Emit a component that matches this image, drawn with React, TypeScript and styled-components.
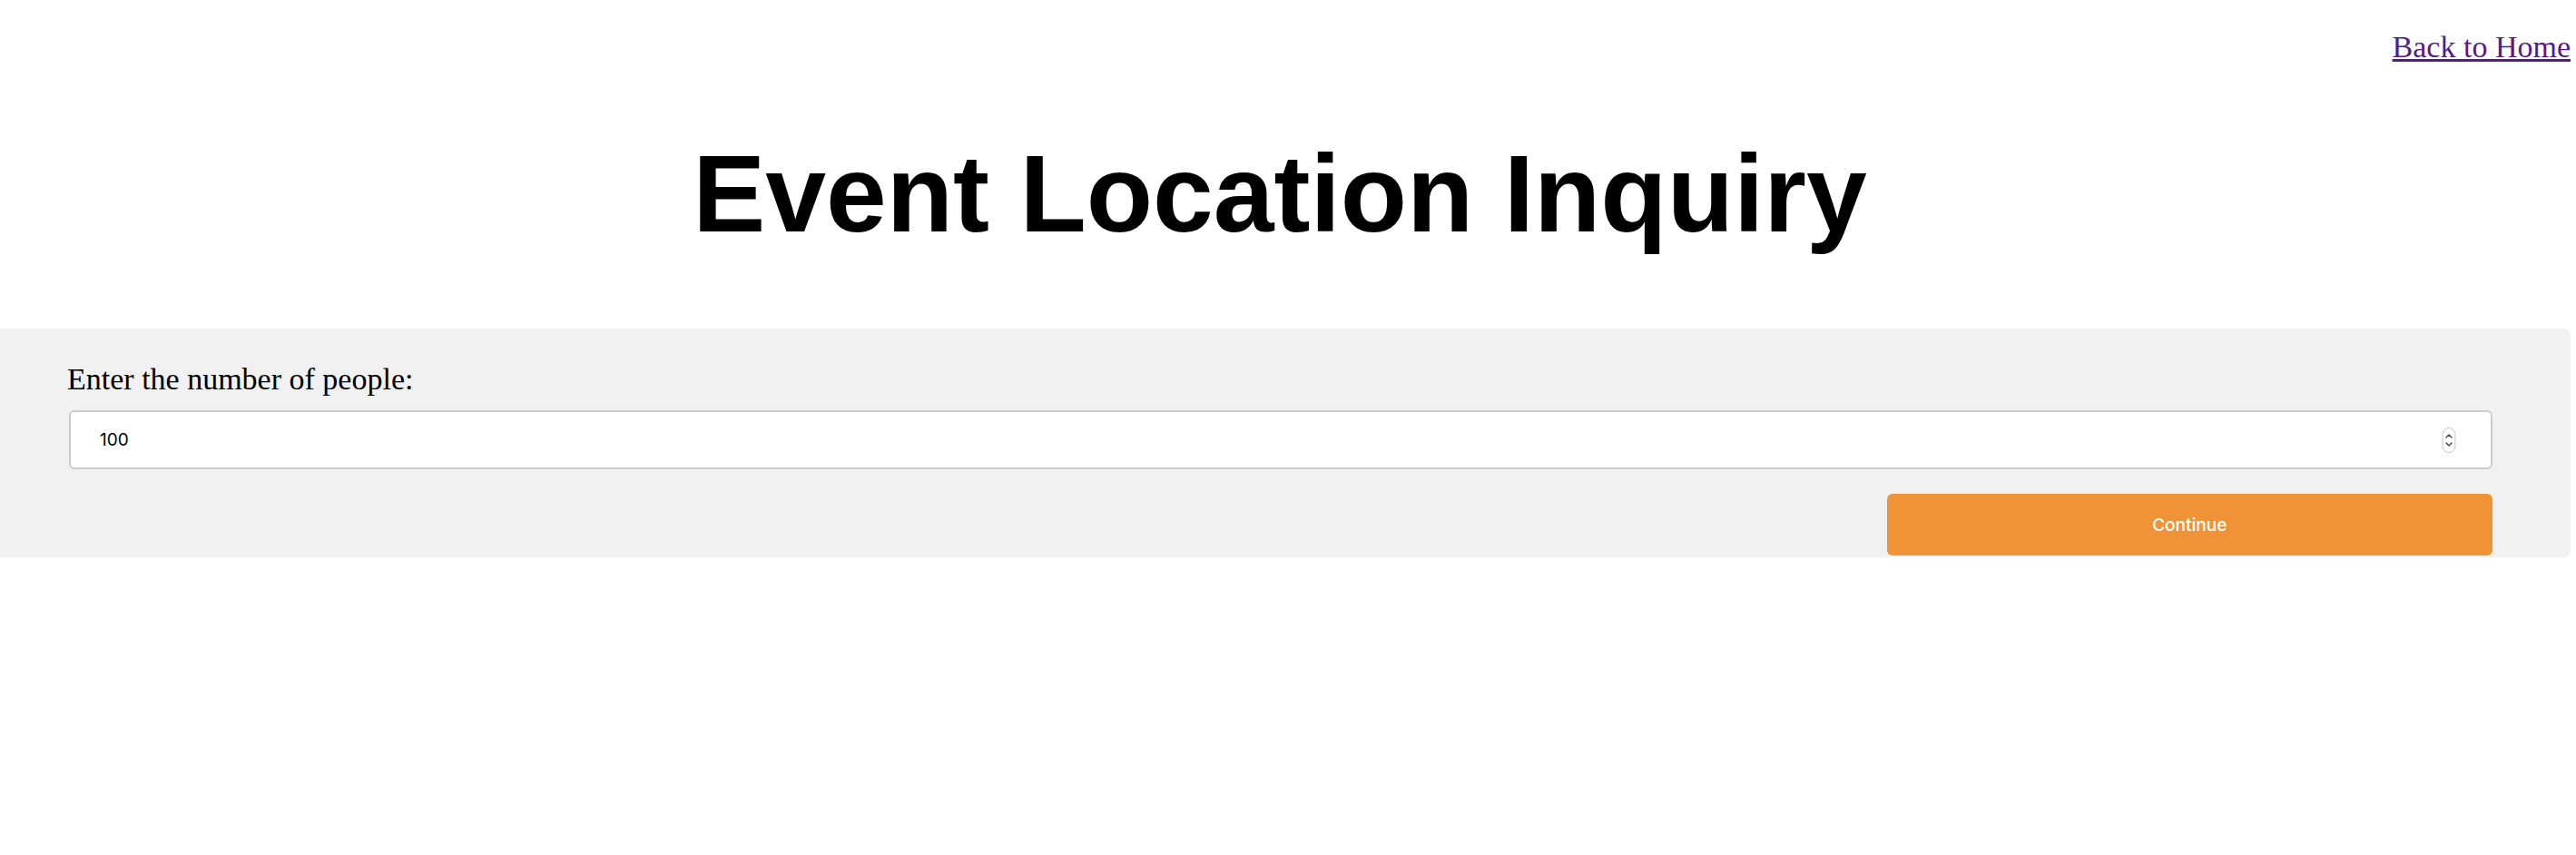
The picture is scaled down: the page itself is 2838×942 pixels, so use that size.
import React from "react";
import styled, { createGlobalStyle } from "styled-components";

const GlobalStyle = createGlobalStyle`
  html, body { margin: 0; padding: 0; background: #ffffff; }
  body { font-family: "Liberation Serif", "Times New Roman", serif; }
`;

const Page = styled.div`
  padding: 0 6px 0 0;
`;

const TopBar = styled.nav`
  display: flex;
  justify-content: flex-end;
  padding-top: 33px;
`;

const HomeLink = styled.a`
  font-family: "Liberation Serif", "Times New Roman", serif;
  font-size: 34px;
  line-height: normal;
  color: #551a8b;
  text-decoration: underline;
`;

const Title = styled.h1`
  margin: 73px 0 0;
  padding-right: 12px;
  font-family: "Liberation Sans", Arial, Helvetica, sans-serif;
  font-weight: 700;
  font-size: 120px;
  line-height: normal;
  text-align: center;
  color: #000;
`;

const Panel = styled.form`
  margin-top: 80px;
  background: #f1f1f1;
  padding: 37px 86px 2px 76px;
  border-radius: 0 8px 8px 0;
`;

const Label = styled.label`
  display: block;
  margin-left: -2px;
  font-family: "Liberation Serif", "Times New Roman", serif;
  font-size: 34px;
  line-height: normal;
  color: #000;
`;

const InputWrap = styled.div`
  position: relative;
  margin-top: 15px;
`;

const NumberInput = styled.input`
  box-sizing: border-box;
  display: block;
  width: 100%;
  height: 65px;
  padding: 0 32px;
  border: 2px solid #cccccc;
  border-radius: 6px;
  background: #ffffff;
  font-family: Inter, "Noto Sans", sans-serif;
  font-size: 19px;
  color: #000;
  outline: none;
  -moz-appearance: textfield;
  &::-webkit-inner-spin-button,
  &::-webkit-outer-spin-button {
    -webkit-appearance: none;
    margin: 0;
  }
`;

const Spinner = styled.svg`
  position: absolute;
  right: 40px;
  top: 50%;
  transform: translateY(-50%);
  pointer-events: none;
`;

const ButtonRow = styled.div`
  display: flex;
  justify-content: flex-end;
  margin-top: 27px;
`;

const ContinueButton = styled.button`
  width: 25%;
  height: 68px;
  border: none;
  border-radius: 6px;
  background: #f09236;
  color: #ffffff;
  font-family: Inter, "Noto Sans", sans-serif;
  font-size: 19px;
  font-weight: 500;
  cursor: pointer;
`;

export default function App() {
  return (
    <>
      <GlobalStyle />
      <Page>
        <TopBar>
          <HomeLink href="#">Back to Home</HomeLink>
        </TopBar>
        <Title>Event Location Inquiry</Title>
        <Panel onSubmit={(e) => e.preventDefault()}>
          <Label htmlFor="people">Enter the number of people:</Label>
          <InputWrap>
            <NumberInput id="people" type="number" defaultValue={100} />
            <Spinner width="16" height="29" viewBox="0 0 16 29">
              <rect x="1" y="1" width="14" height="27" rx="7" fill="#ffffff" stroke="#c4c4c4" strokeWidth="1" />
              <path d="M5 11.5 L8 8.5 L11 11.5" fill="none" stroke="#4a4a4a" strokeWidth="1.5" strokeLinecap="round" strokeLinejoin="round" />
              <path d="M5 17.5 L8 20.5 L11 17.5" fill="none" stroke="#4a4a4a" strokeWidth="1.5" strokeLinecap="round" strokeLinejoin="round" />
            </Spinner>
          </InputWrap>
          <ButtonRow>
            <ContinueButton type="submit">Continue</ContinueButton>
          </ButtonRow>
        </Panel>
      </Page>
    </>
  );
}
